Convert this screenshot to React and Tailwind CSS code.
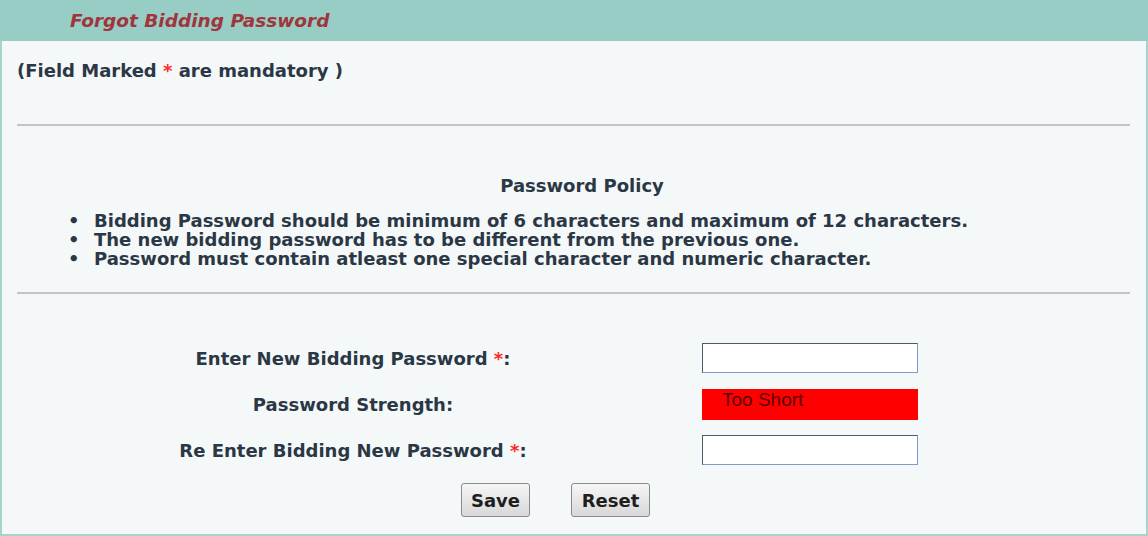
import React from 'react';

const Star = () => <span className="text-[#ff2a2a]">*</span>;

const FormRow = ({ label, children, className = '' }) => (
  <div className={`flex items-center ${className}`}>
    <div className="w-[672px] text-center">{label}</div>
    <div className="pl-[13px]">{children}</div>
  </div>
);

const App = () => {
  const [pwd, setPwd] = React.useState('');
  const [pwd2, setPwd2] = React.useState('');

  return (
    <div
      className="w-[1148px] h-[536px] bg-[#f4f8f8] text-[#2b3744] text-[18px] font-bold leading-[19px]"
      style={{ fontFamily: '"DejaVu Sans", Verdana, sans-serif' }}
    >
      <div className="h-[41px] bg-[#97cdc4] flex items-center pl-[70px]">
        <span className="italic text-[18.5px] text-[#a0353c]">Forgot Bidding Password</span>
      </div>
      <div className="h-[495px] border-l-2 border-r-2 border-b-2 border-[#a6d3cb] px-[15px] flex flex-col">
        <p className="mt-[20px]">
          (Field Marked <Star /> are mandatory )
        </p>
        <hr className="mt-[44px] border-0 border-t-2 border-[#c4c4c4] mr-[1px]" />
        <h3 className="mt-[50px] text-center pl-[16px]">Password Policy</h3>
        <ul className="mt-[16px] pl-[51px] list-none">
          <li className="flex"><span className="w-[26px]">•</span><span>Bidding Password should be minimum of 6 characters and maximum of 12 characters.</span></li>
          <li className="flex"><span className="w-[26px]">•</span><span>The new bidding password has to be different from the previous one.</span></li>
          <li className="flex"><span className="w-[26px]">•</span><span>Password must contain atleast one special character and numeric character.</span></li>
        </ul>
        <hr className="mt-[24px] border-0 border-t-2 border-[#c4c4c4] mr-[1px]" />
        <FormRow className="mt-[49px]" label={<>Enter New Bidding Password <Star />:</>}>
          <input
            type="password"
            value={pwd}
            onChange={(e) => setPwd(e.target.value)}
            className="w-[216px] h-[30px] bg-white border border-[#4e5a6a] border-b-[#7f9cc4] border-r-[#7f9cc4] outline-none"
          />
        </FormRow>
        <FormRow className="mt-[16px]" label="Password Strength:">
          <div
            className="w-[216px] h-[31px] bg-[#ff0000] text-[#5a0000] font-normal text-[19px] leading-[21px] pl-[20px]"
            style={{ fontFamily: '"Liberation Sans", Arial, sans-serif' }}
          >
            Too Short
          </div>
        </FormRow>
        <FormRow className="mt-[15px]" label={<>Re Enter Bidding New Password <Star />:</>}>
          <input
            type="password"
            value={pwd2}
            onChange={(e) => setPwd2(e.target.value)}
            className="w-[216px] h-[30px] bg-white border border-[#4e5a6a] border-b-[#7f9cc4] border-r-[#7f9cc4] outline-none"
          />
        </FormRow>
        <div className="mt-[18px] flex gap-[41px] pl-[444px]">
          <button className="w-[69px] h-[34px] rounded-[3px] border border-[#8a8a8a] bg-gradient-to-b from-[#f6f6f6] to-[#d8d8d8] text-[#1e1e1e] font-bold">
            Save
          </button>
          <button className="w-[79px] h-[34px] rounded-[3px] border border-[#8a8a8a] bg-gradient-to-b from-[#f6f6f6] to-[#d8d8d8] text-[#1e1e1e] font-bold">
            Reset
          </button>
        </div>
      </div>
    </div>
  );
};

export default App;
